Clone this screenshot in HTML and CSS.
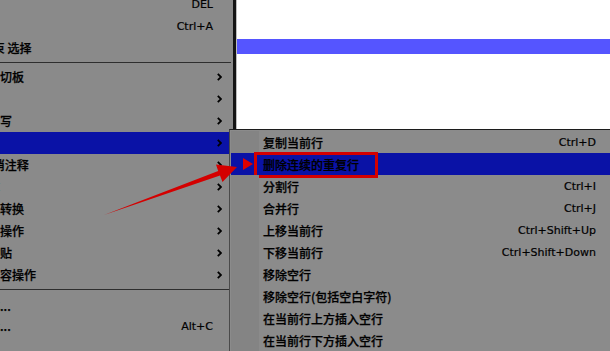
FILE: index.html
```html
<!DOCTYPE html>
<html lang="zh">
<head>
<meta charset="utf-8">
<title>编辑菜单 - 行操作</title>
<link rel="stylesheet" href="styles.css">
</head>
<body>
<div class="screen">
  <div class="menu">
    <div class="menu-list">
      <div class="row first"><span class="label">删除</span><span class="key">DEL</span><span class="chev"></span></div>
      <div class="row"><span class="label">全选</span><span class="key">Ctrl+A</span><span class="chev"></span></div>
      <div class="row"><span class="label">开始/结束 选择</span><span class="key"></span><span class="chev"></span></div>
      <div class="sep"></div>
      <div class="row"><span class="label">复制到剪切板</span><span class="key"></span><span class="chev"><svg viewBox="0 0 5 8" width="5" height="8"><polyline points="0.8,0.8 4,4 0.8,7.2"/></svg></span></div>
      <div class="row"><span class="label">缩进</span><span class="key"></span><span class="chev"><svg viewBox="0 0 5 8" width="5" height="8"><polyline points="0.8,0.8 4,4 0.8,7.2"/></svg></span></div>
      <div class="row"><span class="label">转换大小写</span><span class="key"></span><span class="chev"><svg viewBox="0 0 5 8" width="5" height="8"><polyline points="0.8,0.8 4,4 0.8,7.2"/></svg></span></div>
      <div class="row active"><span class="label">行操作</span><span class="key"></span><span class="chev"><svg viewBox="0 0 5 8" width="5" height="8"><polyline points="0.8,0.8 4,4 0.8,7.2"/></svg></span></div>
      <div class="row"><span class="label">注释/取消注释</span><span class="key"></span><span class="chev"><svg viewBox="0 0 5 8" width="5" height="8"><polyline points="0.8,0.8 4,4 0.8,7.2"/></svg></span></div>
      <div class="row"><span class="label">自动完成</span><span class="key"></span><span class="chev"><svg viewBox="0 0 5 8" width="5" height="8"><polyline points="0.8,0.8 4,4 0.8,7.2"/></svg></span></div>
      <div class="row"><span class="label">文档格式转换</span><span class="key"></span><span class="chev"><svg viewBox="0 0 5 8" width="5" height="8"><polyline points="0.8,0.8 4,4 0.8,7.2"/></svg></span></div>
      <div class="row"><span class="label">空白字符操作</span><span class="key"></span><span class="chev"><svg viewBox="0 0 5 8" width="5" height="8"><polyline points="0.8,0.8 4,4 0.8,7.2"/></svg></span></div>
      <div class="row"><span class="label">选择性粘贴</span><span class="key"></span><span class="chev"><svg viewBox="0 0 5 8" width="5" height="8"><polyline points="0.8,0.8 4,4 0.8,7.2"/></svg></span></div>
      <div class="row"><span class="label">选中区内容操作</span><span class="key"></span><span class="chev"><svg viewBox="0 0 5 8" width="5" height="8"><polyline points="0.8,0.8 4,4 0.8,7.2"/></svg></span></div>
      <div class="sep sep-b"></div>
      <div class="row short"><span class="label">列块模式...</span><span class="key"></span><span class="chev"></span></div>
      <div class="row short"><span class="label">列块编辑...</span><span class="key">Alt+C</span><span class="chev"></span></div>
    </div>
  </div>
  <div class="editor">
    <div class="caret-line"></div>
  </div>

  <div class="submenu">
    <div class="sub-row"><span class="gut"></span><span class="sub-label">复制当前行</span><span class="sub-key">Ctrl+D</span></div>
    <div class="sub-row active"><span class="gut"><svg class="tri" viewBox="0 0 10 12" width="10" height="12"><polygon points="0,0 10,6 0,12"/></svg></span><span class="sub-label">删除连续的重复行</span><span class="sub-key"></span><span class="mark"></span></div>
    <div class="sub-row"><span class="gut"></span><span class="sub-label">分割行</span><span class="sub-key">Ctrl+I</span></div>
    <div class="sub-row"><span class="gut"></span><span class="sub-label">合并行</span><span class="sub-key">Ctrl+J</span></div>
    <div class="sub-row"><span class="gut"></span><span class="sub-label">上移当前行</span><span class="sub-key">Ctrl+Shift+Up</span></div>
    <div class="sub-row"><span class="gut"></span><span class="sub-label">下移当前行</span><span class="sub-key">Ctrl+Shift+Down</span></div>
    <div class="sub-row"><span class="gut"></span><span class="sub-label">移除空行</span><span class="sub-key"></span></div>
    <div class="sub-row"><span class="gut"></span><span class="sub-label">移除空行(包括空白字符)</span><span class="sub-key"></span></div>
    <div class="sub-row"><span class="gut"></span><span class="sub-label">在当前行上方插入空行</span><span class="sub-key"></span></div>
    <div class="sub-row"><span class="gut"></span><span class="sub-label">在当前行下方插入空行</span><span class="sub-key"></span></div>
  </div>

  <svg class="arrow" viewBox="0 0 610 351" width="610" height="351">
    <polygon points="104,215 220,175.5 222.5,182 237,167 216,164.5 218.2,170.9"/>
  </svg>
</div>
</body>
</html>
```

FILE: styles.css
```css
html, body {
  margin: 0;
  padding: 0;
  background: #ffffff;
}

body {
  font-family: "Noto Sans CJK SC", "DejaVu Sans", sans-serif;
  font-size: 12px;
  color: #000;
}

.screen {
  position: relative;
  width: 610px;
  height: 351px;
  overflow: hidden;
  display: flex;
}

.menu {
  width: 233px;
  flex: none;
  background: #8a8a8a;
  border-right: 3px solid #141414;
  box-shadow: 1px 0 0 #bdbdbd;
  overflow: hidden;
}

.menu-list {
  margin-top: -7px;
  display: flex;
  flex-direction: column;
}

.row {
  height: 22px;
  display: flex;
  align-items: center;
  padding-right: 11px;
  white-space: nowrap;
}

.row.short {
  height: 20px;
}

.row.active {
  background: #0a12a6;
}

.label {
  flex: 1;
  margin-left: -48px;
  line-height: 22px;
  font-weight: 500;
  -webkit-text-stroke: 0.25px #000;
}

.key {
  font-family: "DejaVu Sans", sans-serif;
  font-size: 11px;
  -webkit-text-stroke: 0.2px #000;
}

.chev {
  width: 9px;
  display: flex;
  justify-content: flex-end;
  align-items: center;
}

.chev svg polyline {
  fill: none;
  stroke: #000;
  stroke-width: 1.8;
}

.sep {
  height: 7px;
  display: flex;
  align-items: center;
}

.sep::before {
  content: "";
  display: block;
  width: 231px;
  height: 1px;
  background: #2e2e2e;
}

.sep-b {
  height: 10px;
  align-items: flex-start;
  padding-top: 3px;
  box-sizing: border-box;
}

.editor {
  flex: 1;
  background: #ffffff;
  padding-top: 39px;
  margin-left: 1px;
}

.caret-line {
  height: 15px;
  background: #5555ff;
}

.submenu {
  position: absolute;
  left: 229px;
  top: 129px;
  width: 381px;
  height: 230px;
  box-sizing: border-box;
  background: #8b8b8b;
  border-top: 1px solid #1c1c1c;
  border-left: 1px solid #4a4a4a;
  padding: 1px 0 0 1px;
  display: flex;
  flex-direction: column;
}

.sub-row {
  position: relative;
  height: 22px;
  flex: none;
  display: flex;
  align-items: center;
  white-space: nowrap;
}

.sub-row .gut {
  width: 28px;
  height: 22px;
  background: #848484;
  display: flex;
  align-items: center;
  justify-content: flex-end;
  padding-right: 6px;
  box-sizing: border-box;
}

.sub-row.active,
.sub-row.active .gut {
  background: #0a12a6;
}

.tri polygon {
  fill: #e00000;
}

.sub-label {
  flex: 1;
  padding-left: 4px;
  font-weight: 500;
  -webkit-text-stroke: 0.25px #000;
}

.sub-key {
  font-family: "DejaVu Sans", sans-serif;
  font-size: 11px;
  padding-right: 14px;
  -webkit-text-stroke: 0.2px #000;
}

.mark {
  position: absolute;
  left: 23px;
  top: -1px;
  width: 124px;
  height: 26px;
  box-sizing: border-box;
  border: 3px solid #d40000;
}

.arrow {
  position: absolute;
  left: 0;
  top: 0;
  pointer-events: none;
}

.arrow polygon {
  fill: #d40000;
}
```
